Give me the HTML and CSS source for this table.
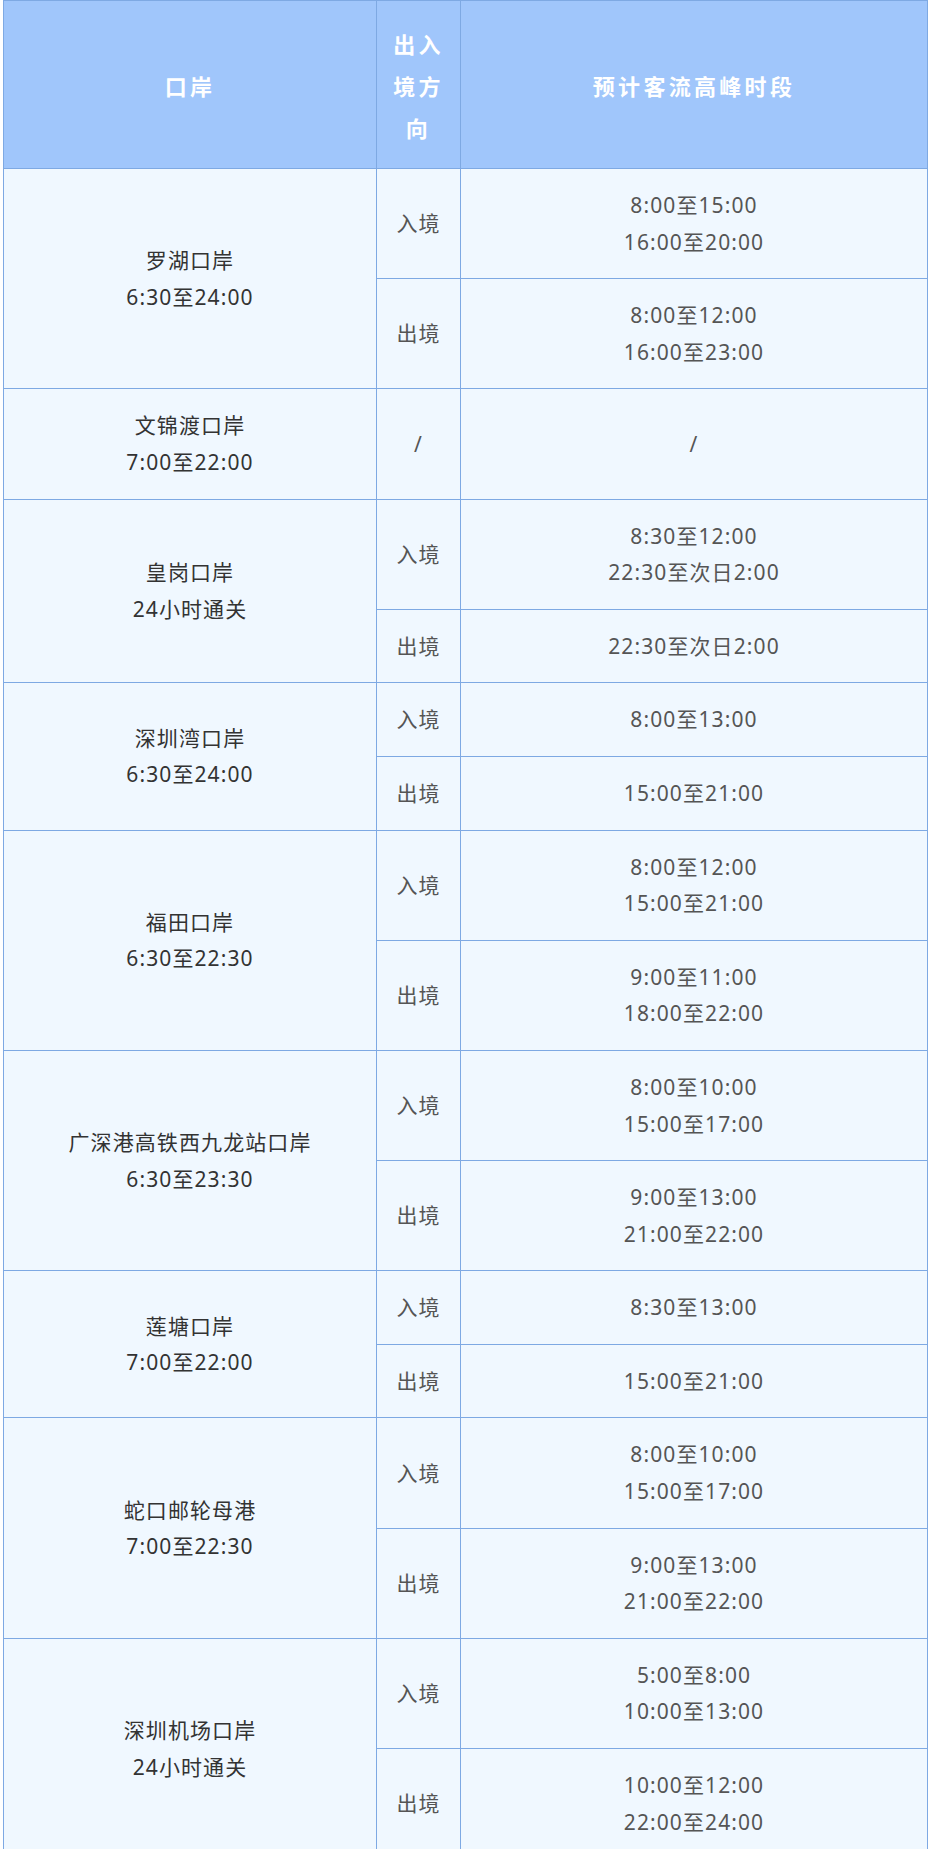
FILE: index.html
```html
<!DOCTYPE html>
<html lang="zh-CN">
<head>
<meta charset="utf-8">
<title>口岸预计客流高峰时段</title>
<link rel="stylesheet" href="styles.css">
</head>
<body>
<table class="port-table">
  <colgroup>
    <col class="c-port">
    <col class="c-dir">
    <col class="c-time">
  </colgroup>
  <thead>
    <tr>
      <th>口岸</th>
      <th>出入境方向</th>
      <th>预计客流高峰时段</th>
    </tr>
  </thead>
  <tbody>
    <tr>
      <td class="port" rowspan="2">罗湖口岸<br>6:30至24:00</td>
      <td class="dir">入境</td>
      <td class="time">8:00至15:00<br>16:00至20:00</td>
    </tr>
    <tr>
      <td class="dir">出境</td>
      <td class="time">8:00至12:00<br>16:00至23:00</td>
    </tr>
    <tr>
      <td class="port">文锦渡口岸<br>7:00至22:00</td>
      <td class="dir">/</td>
      <td class="time">/</td>
    </tr>
    <tr>
      <td class="port" rowspan="2">皇岗口岸<br>24小时通关</td>
      <td class="dir">入境</td>
      <td class="time">8:30至12:00<br>22:30至次日2:00</td>
    </tr>
    <tr>
      <td class="dir">出境</td>
      <td class="time">22:30至次日2:00</td>
    </tr>
    <tr>
      <td class="port" rowspan="2">深圳湾口岸<br>6:30至24:00</td>
      <td class="dir">入境</td>
      <td class="time">8:00至13:00</td>
    </tr>
    <tr>
      <td class="dir">出境</td>
      <td class="time">15:00至21:00</td>
    </tr>
    <tr>
      <td class="port" rowspan="2">福田口岸<br>6:30至22:30</td>
      <td class="dir">入境</td>
      <td class="time">8:00至12:00<br>15:00至21:00</td>
    </tr>
    <tr>
      <td class="dir">出境</td>
      <td class="time">9:00至11:00<br>18:00至22:00</td>
    </tr>
    <tr>
      <td class="port" rowspan="2">广深港高铁西九龙站口岸<br>6:30至23:30</td>
      <td class="dir">入境</td>
      <td class="time">8:00至10:00<br>15:00至17:00</td>
    </tr>
    <tr>
      <td class="dir">出境</td>
      <td class="time">9:00至13:00<br>21:00至22:00</td>
    </tr>
    <tr>
      <td class="port" rowspan="2">莲塘口岸<br>7:00至22:00</td>
      <td class="dir">入境</td>
      <td class="time">8:30至13:00</td>
    </tr>
    <tr>
      <td class="dir">出境</td>
      <td class="time">15:00至21:00</td>
    </tr>
    <tr>
      <td class="port" rowspan="2">蛇口邮轮母港<br>7:00至22:30</td>
      <td class="dir">入境</td>
      <td class="time">8:00至10:00<br>15:00至17:00</td>
    </tr>
    <tr>
      <td class="dir">出境</td>
      <td class="time">9:00至13:00<br>21:00至22:00</td>
    </tr>
    <tr>
      <td class="port" rowspan="2">深圳机场口岸<br>24小时通关</td>
      <td class="dir">入境</td>
      <td class="time">5:00至8:00<br>10:00至13:00</td>
    </tr>
    <tr>
      <td class="dir">出境</td>
      <td class="time">10:00至12:00<br>22:00至24:00</td>
    </tr>
  </tbody>
</table>
</body>
</html>
```

FILE: styles.css
```css
html, body {
  margin: 0;
  padding: 0;
  background: #ffffff;
}

body {
  font-family: "Noto Sans", "Noto Sans CJK SC", sans-serif;
  padding: 0 3px 0 3px;
}

.port-table {
  border-collapse: collapse;
  table-layout: fixed;
  width: 924px;
}

.c-port { width: 373px; }
.c-dir { width: 84px; }
.c-time { width: 467px; }

.port-table th,
.port-table td {
  border: 1px solid #7ea9e3;
  text-align: center;
  vertical-align: middle;
}

.port-table th {
  background: #a0c6fb;
  color: #ffffff;
  font-family: "Noto Sans CJK SC", sans-serif;
  font-weight: 700;
  font-size: 22px;
  line-height: 42px;
  letter-spacing: 3.3px;
  padding: 20.5px 10px;
}

.port-table td {
  background: #f0f8ff;
  font-size: 21px;
  line-height: 36.6px;
  letter-spacing: 1.1px;
  padding: 18px 10px;
  color: #555555;
}

.port-table td.port {
  color: #333333;
}
```
